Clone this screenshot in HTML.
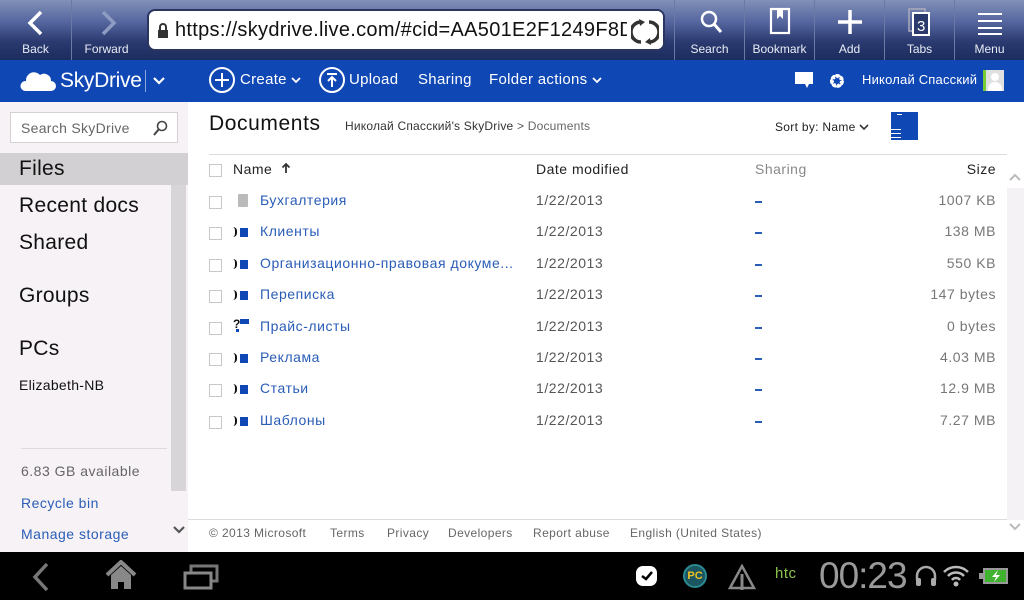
<!DOCTYPE html>
<html><head><meta charset="utf-8"><style>
*{margin:0;padding:0;box-sizing:border-box}
body{width:1024px;height:600px;overflow:hidden;position:relative;background:#fff;font-family:"Liberation Sans","DejaVu Sans",sans-serif}
.a{position:absolute;white-space:nowrap}
#tb{left:0;top:0;width:1024px;height:60px;background:linear-gradient(#8191b8 0%,#5767a0 35%,#2a3a70 70%,#1d2c5e 100%)}
.btn{position:absolute;top:0;height:60px;border-left:1px solid #6a7aa4;color:#e8ecf5;font-size:12px;text-align:center}
.btn .l{position:absolute;bottom:4px;left:0;right:0}
#sd{left:0;top:60px;width:1024px;height:42px;background:#0f47b4;color:#fff;font-size:15px;letter-spacing:0.3px}
#side{left:0;top:102px;width:188px;height:450px;background:#f6f2f5}
.nav{font-size:21px;color:#111;left:19px;letter-spacing:0.3px}
.cb{position:absolute;left:209px;width:13px;height:13px;border:1px solid #c8c8c8;background:#fff}
.nm,.dt,.sz{letter-spacing:0.55px;font-size:14px}
.nm{position:absolute;left:260px;color:#2a5db7}
.dt{position:absolute;left:536px;color:#555}
.sh{position:absolute;left:755px;width:7px;height:2px;background:#2a5db7}
.sz{position:absolute;right:28px;color:#777;text-align:right}
.ic{position:absolute;left:233px;width:16px;height:12px}
.ic i{position:absolute;left:7px;top:2px;width:8px;height:9px;background:#0f47b4}
.ic b{position:absolute;left:0;top:1px;width:4px;height:10px;border-right:2px solid #111;border-radius:0 5px 5px 0}
#bot{left:0;top:552px;width:1024px;height:48px;background:#000}
.ft{position:absolute;top:526px;font-size:12px;color:#666;letter-spacing:0.4px}
</style></head><body>
<div id="tb" class="a">
 <div class="btn" style="left:0;width:71px;border-left:none"><svg class="a" style="left:25px;top:10px" width="22" height="26"><path d="M16 2 L5 13 L16 24" stroke="#fff" stroke-width="3.5" fill="none"/></svg><div class="l">Back</div></div>
 <div class="btn" style="left:71px;width:70px"><svg class="a" style="left:25px;top:10px" width="22" height="26"><path d="M6 2 L17 13 L6 24" stroke="#8e9cc2" stroke-width="3.5" fill="none"/></svg><div class="l">Forward</div></div>
 <div class="a" style="left:147px;top:9px;width:518px;height:42px;background:#fff;border-radius:8px;border:2px solid #2a3560;overflow:hidden">
  <svg class="a" style="left:8px;top:12px" width="12" height="16"><path d="M3 7 V4 a3 3 0 0 1 6 0 V7" stroke="#333" stroke-width="2" fill="none"/><rect x="1" y="7" width="10" height="8" fill="#333"/></svg>
  <div class="a" style="left:26px;top:8px;font-size:20px;color:#111;letter-spacing:0.3px">https://skydrive.live.com/#cid=AA501E2F1249F8D9</div>
  <div class="a" style="right:0;top:0;width:36px;height:40px;background:#fff"></div>
  <svg class="a" style="right:4px;top:7px" width="28" height="28"><path d="M10 4 A10 10 0 0 0 10 24" stroke="#333" stroke-width="3.5" fill="none"/><path d="M18 24 A10 10 0 0 0 18 4" stroke="#333" stroke-width="3.5" fill="none"/><path d="M8 1 L14 4 L9 8Z" fill="#333"/><path d="M20 27 L14 24 L19 20Z" fill="#333"/></svg>
 </div>
 <div class="btn" style="left:674px;width:70px"><svg class="a" style="left:24px;top:9px" width="24" height="26"><circle cx="10" cy="10" r="7" stroke="#fff" stroke-width="2.5" fill="none"/><path d="M15 15 L22 23" stroke="#fff" stroke-width="3"/></svg><div class="l">Search</div></div>
 <div class="btn" style="left:744px;width:70px"><svg class="a" style="left:24px;top:7px" width="24" height="30"><rect x="2" y="2" width="18" height="24" stroke="#fff" stroke-width="2.2" fill="none"/><path d="M8 2 V12 L11 9 L14 12 V2Z" fill="#fff"/></svg><div class="l">Bookmark</div></div>
 <div class="btn" style="left:814px;width:70px"><svg class="a" style="left:22px;top:9px" width="26" height="26"><path d="M13 1 V25 M1 13 H25" stroke="#fff" stroke-width="3.5"/></svg><div class="l">Add</div></div>
 <div class="btn" style="left:884px;width:70px"><svg class="a" style="left:22px;top:7px" width="26" height="30"><rect x="2" y="2" width="16" height="22" stroke="#aab" stroke-width="1.5" fill="none"/><rect x="6" y="6" width="16" height="22" stroke="#fff" stroke-width="2" fill="#2a3a6c"/><text x="10" y="24" font-size="15" fill="#fff" font-family="Liberation Sans">3</text></svg><div class="l">Tabs</div></div>
 <div class="btn" style="left:954px;width:70px"><svg class="a" style="left:22px;top:11px" width="26" height="24"><path d="M1 3 H25 M1 10 H25 M1 17 H25 M1 23 H25" stroke="#fff" stroke-width="2"/></svg><div class="l">Menu</div></div>
</div>
<div id="sd" class="a">
 <svg class="a" style="left:20px;top:9px" width="36" height="24"><path d="M5 22 A5 5 0 0 1 6 12 A8 8 0 0 1 20 6 A7 7 0 0 1 31 12 A5 5 0 0 1 31 22Z" fill="#fff"/></svg>
 <div class="a" style="left:60px;top:9px;font-size:21px;letter-spacing:-0.3px">SkyDrive</div>
 <div class="a" style="left:145px;top:10px;width:1px;height:22px;background:#8aa6de"></div>
 <svg class="a" style="left:153px;top:16px" width="12" height="10"><path d="M1 2 L6 7 L11 2" stroke="#fff" stroke-width="2.2" fill="none"/></svg>
 <svg class="a" style="left:208px;top:6px" width="28" height="28"><circle cx="14" cy="14" r="12" stroke="#fff" stroke-width="2" fill="none"/><path d="M14 7 V21 M7 14 H21" stroke="#fff" stroke-width="2"/></svg>
 <div class="a" style="left:240px;top:11px">Create <svg width="10" height="8"><path d="M1 2 L5 6 L9 2" stroke="#fff" stroke-width="1.8" fill="none"/></svg></div>
 <svg class="a" style="left:318px;top:6px" width="28" height="28"><circle cx="14" cy="14" r="12" stroke="#fff" stroke-width="2" fill="none"/><path d="M9 8 H19 M14 11 V21 M10 15 L14 11 L18 15" stroke="#fff" stroke-width="2" fill="none"/></svg>
 <div class="a" style="left:349px;top:11px">Upload</div>
 <div class="a" style="left:418px;top:11px">Sharing</div>
 <div class="a" style="left:489px;top:11px">Folder actions <svg width="10" height="8"><path d="M1 2 L5 6 L9 2" stroke="#fff" stroke-width="1.8" fill="none"/></svg></div>
 <svg class="a" style="left:795px;top:12px" width="18" height="16"><rect x="0" y="0" width="18" height="12" fill="#fff"/><path d="M10 12 L12 16 L14 12Z" fill="#fff"/></svg>
 <svg class="a" style="left:828px;top:12px" width="18" height="18"><circle cx="9" cy="9" r="5" stroke="#fff" stroke-width="4" fill="none" stroke-dasharray="3 1.5"/><circle cx="9" cy="9" r="5.5" fill="none" stroke="#fff" stroke-width="2"/></svg>
 <div class="a" style="left:862px;top:12px;font-size:13px;letter-spacing:0.2px">Николай Спасский</div>
 <div class="a" style="left:983px;top:10px;width:21px;height:21px;background:#e0e0e0;border-left:3px solid #7c3"><div class="a" style="left:5px;top:3px;width:8px;height:8px;border-radius:50%;background:#fff"></div><div class="a" style="left:2px;top:12px;width:14px;height:9px;border-radius:7px 7px 0 0;background:#fff"></div></div>
</div>
<div id="side" class="a">
 <div class="a" style="left:10px;top:10px;width:168px;height:31px;border:1px solid #d4d0d4;background:#fff"><div class="a" style="left:10px;top:7px;font-size:14px;color:#666;letter-spacing:0.3px">Search SkyDrive</div><svg class="a" style="left:142px;top:7px" width="16" height="16"><circle cx="9" cy="6" r="4.5" stroke="#444" stroke-width="1.6" fill="none"/><path d="M6 9 L1 15" stroke="#444" stroke-width="2"/></svg></div>
 <div class="a" style="left:0;top:51px;width:188px;height:32px;background:#d2d0d2"></div>
 <div class="a" style="left:171px;top:83px;width:15px;height:306px;background:#d7d5d7"></div>
 <div class="a nav" style="top:55px">Files</div>
 <div class="a nav" style="top:92px">Recent docs</div>
 <div class="a nav" style="top:129px">Shared</div>
 <div class="a nav" style="top:182px">Groups</div>
 <div class="a nav" style="top:235px">PCs</div>
 <div class="a" style="left:19px;top:275px;font-size:14px;color:#111;letter-spacing:0.3px">Elizabeth-NB</div>
 <div class="a" style="left:21px;top:346px;width:146px;height:1px;background:#dcdcdc"></div>
 <div class="a" style="left:21px;top:361px;font-size:14px;color:#666;letter-spacing:0.5px">6.83 GB available</div>
 <div class="a" style="left:21px;top:393px;font-size:14px;color:#2a5db7;letter-spacing:0.5px">Recycle bin</div>
 <div class="a" style="left:21px;top:424px;font-size:14px;color:#2a5db7;letter-spacing:0.5px">Manage storage</div>
 <svg class="a" style="left:172px;top:423px" width="14" height="10"><path d="M2 2 L7 7 L12 2" stroke="#555" stroke-width="2.2" fill="none"/></svg>
</div>
<div class="a" style="left:209px;top:112px;font-size:21px;color:#111;letter-spacing:0.6px">Documents</div>
<div class="a" style="left:345px;top:119px;font-size:12px;color:#333;letter-spacing:0.2px">Николай Спасский's SkyDrive <span style="color:#555">&gt;</span> <span style="color:#666">Documents</span></div>
<div class="a" style="left:775px;top:120px;font-size:12px;color:#222;letter-spacing:0.3px">Sort by: Name <svg width="10" height="8"><path d="M1 2 L5 6 L9 2" stroke="#333" stroke-width="1.6" fill="none"/></svg></div>
<div class="a" style="left:891px;top:112px;width:27px;height:28px;background:#0f47b4"><div class="a" style="left:6px;top:2px;width:5px;height:1px;background:#fff"></div><div class="a" style="left:0;top:17px;width:10px;height:1px;background:#fff"></div><div class="a" style="left:0;top:21px;width:10px;height:1px;background:#fff"></div><div class="a" style="left:0;top:25px;width:10px;height:1px;background:#fff"></div></div>
<div class="a" style="left:209px;top:154px;width:798px;height:1px;background:#dcdcdc"></div>
<div class="a" style="left:1007px;top:188px;width:17px;height:332px;background:#f5f2f5"></div>
<svg class="a" style="left:1008px;top:172px" width="14" height="10"><path d="M2 8 L7 3 L12 8" stroke="#bbb" stroke-width="2" fill="none"/></svg>
<svg class="a" style="left:1008px;top:522px" width="14" height="10"><path d="M2 2 L7 7 L12 2" stroke="#bbb" stroke-width="2" fill="none"/></svg>
<div class="cb" style="top:164px"></div>
<div class="a" style="left:233px;top:161px;font-size:14px;color:#222;letter-spacing:0.5px">Name &nbsp;<svg width="10" height="12"><path d="M5 11 V2 M1.5 5.5 L5 2 L8.5 5.5" stroke="#333" stroke-width="1.8" fill="none"/></svg></div>
<div class="a" style="left:536px;top:161px;font-size:14px;color:#222;letter-spacing:0.5px">Date modified</div>
<div class="a" style="left:755px;top:161px;font-size:14px;color:#888;letter-spacing:0.5px">Sharing</div>
<div class="a" style="right:28px;top:161px;font-size:14px;color:#222;letter-spacing:0.5px">Size</div>

<div class="cb" style="top:196px"></div><div class="a" style="left:238px;top:194px;width:10px;height:13px;background:#bbb;border-radius:1px"></div><div class="nm" style="top:192px">Бухгалтерия</div><div class="dt" style="top:192px">1/22/2013</div><div class="sh" style="top:201px"></div><div class="sz" style="top:192px">1007 KB</div>
<div class="cb" style="top:227px"></div><div class="ic" style="top:226px"><b></b><i></i></div><div class="nm" style="top:223px">Клиенты</div><div class="dt" style="top:223px">1/22/2013</div><div class="sh" style="top:232px"></div><div class="sz" style="top:223px">138 MB</div>
<div class="cb" style="top:259px"></div><div class="ic" style="top:258px"><b></b><i></i></div><div class="nm" style="top:255px">Организационно-правовая докуме...</div><div class="dt" style="top:255px">1/22/2013</div><div class="sh" style="top:264px"></div><div class="sz" style="top:255px">550 KB</div>
<div class="cb" style="top:290px"></div><div class="ic" style="top:289px"><b></b><i></i></div><div class="nm" style="top:286px">Переписка</div><div class="dt" style="top:286px">1/22/2013</div><div class="sh" style="top:295px"></div><div class="sz" style="top:286px">147 bytes</div>
<div class="cb" style="top:322px"></div><div class="a" style="left:233px;top:317px;font-size:12px;color:#111;font-weight:bold">?</div><div class="a" style="left:240px;top:319px;width:9px;height:5px;background:#0f47b4"></div><div class="a" style="left:236px;top:329px;width:3px;height:3px;background:#0f47b4"></div><div class="nm" style="top:318px">Прайс-листы</div><div class="dt" style="top:318px">1/22/2013</div><div class="sh" style="top:327px"></div><div class="sz" style="top:318px">0 bytes</div>
<div class="cb" style="top:353px"></div><div class="ic" style="top:352px"><b></b><i></i></div><div class="nm" style="top:349px">Реклама</div><div class="dt" style="top:349px">1/22/2013</div><div class="sh" style="top:358px"></div><div class="sz" style="top:349px">4.03 MB</div>
<div class="cb" style="top:384px"></div><div class="ic" style="top:383px"><b></b><i></i></div><div class="nm" style="top:380px">Статьи</div><div class="dt" style="top:380px">1/22/2013</div><div class="sh" style="top:389px"></div><div class="sz" style="top:380px">12.9 MB</div>
<div class="cb" style="top:416px"></div><div class="ic" style="top:415px"><b></b><i></i></div><div class="nm" style="top:412px">Шаблоны</div><div class="dt" style="top:412px">1/22/2013</div><div class="sh" style="top:421px"></div><div class="sz" style="top:412px">7.27 MB</div>

<div class="a" style="left:188px;top:519px;width:819px;height:1px;background:#dcdcdc"></div>
<div class="ft" style="left:209px">© 2013 Microsoft</div>
<div class="ft" style="left:330px">Terms</div>
<div class="ft" style="left:387px">Privacy</div>
<div class="ft" style="left:448px">Developers</div>
<div class="ft" style="left:533px">Report abuse</div>
<div class="ft" style="left:630px">English (United States)</div>

<div id="bot" class="a">
 <svg class="a" style="left:30px;top:10px" width="22" height="30"><path d="M17 2 L5 15 L17 28" stroke="#777" stroke-width="3.5" fill="none"/></svg>
 <svg class="a" style="left:105px;top:8px" width="32" height="30"><path d="M2 15 L16 2 L30 15" stroke="#888" stroke-width="4" fill="none"/><path d="M6 15 V29 H13 V22 H19 V29 H26 V15 L16 6Z" fill="#888"/></svg>
 <svg class="a" style="left:183px;top:12px" width="36" height="26"><rect x="8" y="2" width="26" height="15" stroke="#777" stroke-width="3" fill="none"/><rect x="2" y="9" width="26" height="15" stroke="#888" stroke-width="3" fill="#000"/></svg>
 <div class="a" style="left:636px;top:14px;width:21px;height:20px;background:#fff;border-radius:7px"></div>
 <svg class="a" style="left:639px;top:17px" width="16" height="14"><path d="M3 7 L7 10 L13 3" stroke="#000" stroke-width="2.5" fill="none"/></svg>
 <div class="a" style="left:683px;top:12px;width:24px;height:24px;border-radius:50%;background:#1a5560;border:2px solid #2a8a90;color:#f0c020;font-size:11px;font-weight:bold;text-align:center;line-height:20px">PC</div>
 <svg class="a" style="left:728px;top:12px" width="28" height="26"><path d="M14 2 L26 24 H2Z" stroke="#888" stroke-width="2.5" fill="none"/><path d="M14 10 V26" stroke="#888" stroke-width="3"/></svg>
 <div class="a" style="left:775px;top:13px;font-size:15px;color:#8bc34a;letter-spacing:0.5px">htc</div>
 <div class="a" style="left:819px;top:3px;font-size:37px;color:#9a9a9a;letter-spacing:-1px">00:23</div>
 <svg class="a" style="left:914px;top:13px" width="24" height="24"><path d="M3 15 V11 A9 9 0 0 1 21 11 V15" stroke="#aaa" stroke-width="2.5" fill="none"/><rect x="2" y="13" width="5" height="8" rx="2" fill="#aaa"/><rect x="17" y="13" width="5" height="8" rx="2" fill="#aaa"/></svg>
 <svg class="a" style="left:942px;top:11px" width="28" height="26"><path d="M2 9 A17 17 0 0 1 26 9 M6 13 A11 11 0 0 1 22 13 M10 17 A5 5 0 0 1 18 17" stroke="#bbb" stroke-width="2.5" fill="none"/><circle cx="14" cy="21" r="2.5" fill="#bbb"/></svg>
 <div class="a" style="left:983px;top:16px;width:25px;height:16px;border:2px solid #999;background:#3fb32f"></div>
 <div class="a" style="left:979px;top:21px;width:4px;height:6px;background:#999"></div>
 <svg class="a" style="left:989px;top:17px" width="14" height="14"><path d="M9 1 L3 8 H7 L5 13 L11 6 H7Z" fill="#fff"/></svg>
</div>
</body></html>
